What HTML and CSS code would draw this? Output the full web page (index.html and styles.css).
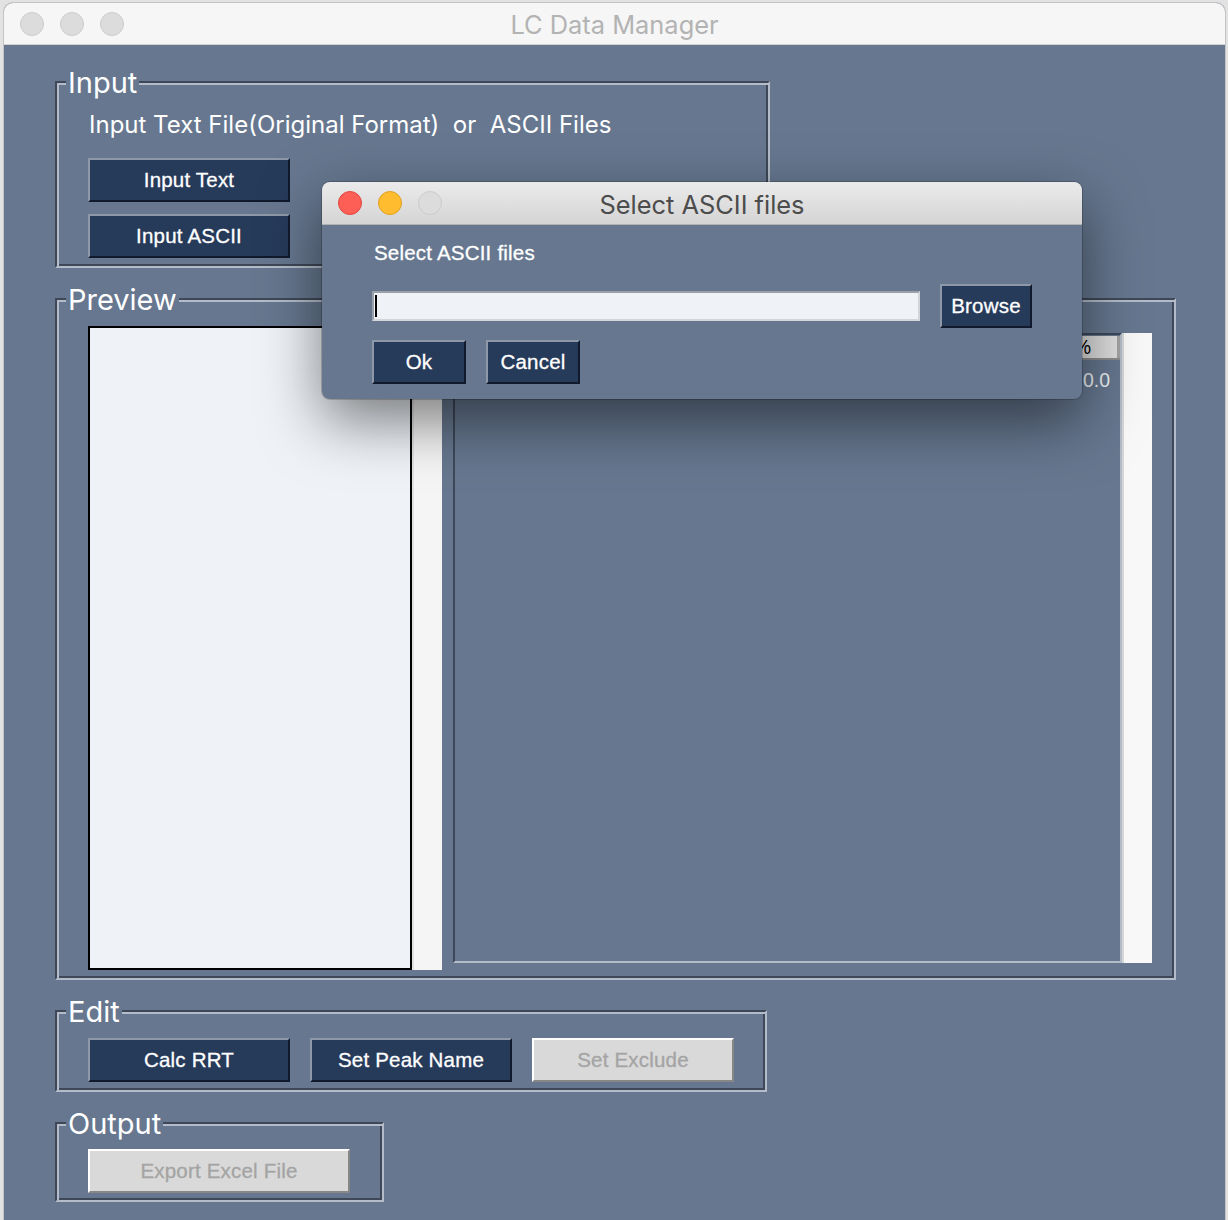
FILE: index.html
```html
<!DOCTYPE html>
<html lang="en">
<head>
<meta charset="utf-8">
<title>LC Data Manager</title>
<link rel="stylesheet" href="styles.css">
</head>
<body>
<div class="desktop">
  <div class="window">
    <div class="titlebar">
      <div class="lights">
        <span class="light"></span><span class="light"></span><span class="light"></span>
      </div>
      <div class="win-title">LC Data Manager</div>
      <div></div>
    </div>

    <div class="content">
      <fieldset class="group group-input">
        <legend>Input</legend>
        <div class="group-body body-input">
          <p class="hint">Input Text File(Original Format)  or  ASCII Files</p>
          <div class="btn-col">
            <button class="btn">Input Text</button>
            <button class="btn">Input ASCII</button>
          </div>
        </div>
      </fieldset>

      <fieldset class="group group-preview">
        <legend>Preview</legend>
        <div class="group-body body-preview">
          <div class="textpane">
            <div class="textbox"></div>
            <div class="vscroll"></div>
          </div>
          <div class="treepane">
            <div class="tree">
              <div class="tree-head">
                <span class="cell c1">No.</span>
                <span class="cell c2">RT</span>
                <span class="cell c3">Peak Name</span>
                <span class="cell c4">RRT</span>
                <span class="cell c5">Area</span>
                <span class="cell c6">Area%</span>
              </div>
              <div class="tree-row">
                <span class="cell c1">1</span>
                <span class="cell c2">0.000</span>
                <span class="cell c3"></span>
                <span class="cell c4">0.000</span>
                <span class="cell c5">0</span>
                <span class="cell c6">0.0</span>
              </div>
            </div>
            <div class="vscroll vscroll-tree"></div>
          </div>
        </div>
      </fieldset>

      <fieldset class="group group-edit">
        <legend>Edit</legend>
        <div class="group-body body-edit">
          <button class="btn">Calc RRT</button>
          <button class="btn">Set Peak Name</button>
          <button class="btn" disabled>Set Exclude</button>
        </div>
      </fieldset>

      <fieldset class="group group-output">
        <legend>Output</legend>
        <div class="group-body body-output">
          <button class="btn btn-wide" disabled>Export Excel File</button>
        </div>
      </fieldset>
    </div>

    <div class="dialog">
      <div class="dlg-titlebar">
        <div class="lights">
          <span class="light red"></span><span class="light yellow"></span><span class="light"></span>
        </div>
        <div class="dlg-title">Select ASCII files</div>
        <div></div>
      </div>
      <div class="dlg-body">
        <div class="dlg-label">Select ASCII files</div>
        <div class="dlg-row">
          <div class="entry"><span class="caret"></span></div>
          <button class="btn btn-browse">Browse</button>
        </div>
        <div class="dlg-actions">
          <button class="btn btn-sm">Ok</button>
          <button class="btn btn-sm">Cancel</button>
        </div>
      </div>
    </div>
  </div>
</div>
</body>
</html>
```

FILE: styles.css
```css
* { box-sizing: border-box; }

body {
  margin: 0;
  background: #e2e2e2;
  font-family: "Liberation Sans", Arial, sans-serif;
}

.desktop {
  height: 1220px;
  padding-top: 2px;
  overflow: hidden;
}

.window {
  position: relative;
  margin-left: 3px;
  width: 1223px;
  height: 1218px;
  border: 1px solid #c4c4c4;
  border-bottom: none;
  border-radius: 10px 10px 0 0;
  background: #66778f;
  overflow: hidden;
}

/* ---------- title bars ---------- */
.titlebar {
  height: 42px;
  background: #f6f6f6;
  border-bottom: 1px solid #d3d3d3;
  display: grid;
  grid-template-columns: 1fr auto 1fr;
  align-items: center;
}

.lights {
  display: flex;
  gap: 16px;
  padding-left: 16px;
}

.light {
  width: 24px;
  height: 24px;
  border-radius: 50%;
  background: #dcdcdc;
  border: 1px solid #cbcbcb;
}

.light.red { background: #fd5f57; border-color: #e0463f; }
.light.yellow { background: #febc2e; border-color: #dfa022; }

.win-title {
  padding-top: 3px;
  font-family: Inter, "Liberation Sans", sans-serif;
  font-size: 25.4px;
  line-height: 28px;
  color: #b3b3b3;
}

/* ---------- content ---------- */
.content {
  padding: 21px 0 0 51px;
}

.group {
  margin: 0 0 15px 0;
  padding: 0;
  min-width: 0;
  border: 2px solid;
  border-color: #3e4858 #b3bcc8 #b3bcc8 #3e4858;
  box-shadow: inset 2px 2px 0 #b3bcc8, inset -2px -2px 0 #3e4858;
}

.group legend {
  margin-left: 9px;
  padding: 2px 2px 0;
  font-family: Inter, "Liberation Sans", sans-serif;
  font-size: 29px;
  line-height: 30px;
  color: #ffffff;
  background: #66778f;
}

.group-input { width: 715px; }
.group-preview { width: 1121px; }
.group-edit { width: 712px; }
.group-output { width: 329px; }

.body-input { padding: 13px 0 8px 31px; }

.hint {
  margin: 0;
  padding-left: 1px;
  font-family: Inter, "Liberation Sans", sans-serif;
  font-size: 24px;
  line-height: 28px;
  color: #ffffff;
  white-space: pre;
}

.btn-col {
  margin-top: 19px;
  display: flex;
  flex-direction: column;
  gap: 12px;
}

.btn {
  width: 202px;
  height: 44px;
  padding: 0;
  background: #263a5a;
  border: 2px solid;
  border-color: #8e98a9 #111a2d #111a2d #8e98a9;
  color: #ffffff;
  font-family: "Liberation Sans", Arial, sans-serif;
  font-size: 20.5px;
  line-height: 24px;
  letter-spacing: 0.2px;
  -webkit-text-stroke: 0.3px currentColor;
}

.btn:disabled {
  background: #d9d9d9;
  border-color: #ffffff #878787 #878787 #ffffff;
  color: #a4a4a4;
}

.btn-wide { width: 262px; }

.body-edit {
  padding: 11px 0 8px 31px;
  display: flex;
  gap: 20px;
}

.body-output { padding: 10px 0 7px 31px; }

/* ---------- preview ---------- */
.body-preview {
  padding: 11px 22px 8px 31px;
  display: flex;
  align-items: center;
  gap: 11px;
}

.textpane {
  display: flex;
  height: 644px;
}

.textbox {
  width: 324px;
  height: 100%;
  border: 2px solid #000000;
  background: #eff3f8;
}

.vscroll {
  width: 30px;
  height: 100%;
  background: #f5f5f5;
  border-left: 2px solid #e2e2e2;
}

.vscroll-tree {
  background: #f8f8f8;
  border-left: 2px solid #d6d6d6;
}

.treepane {
  display: flex;
  height: 630px;
}

.tree {
  width: 669px;
  height: 100%;
  border: 2px solid;
  border-color: #3e4858 #b3bcc8 #b3bcc8 #3e4858;
  background: #66778f;
}

.tree-head {
  display: flex;
  height: 24px;
  margin-top: 1px;
  background: #dfdfdf;
  border-bottom: 2px solid #8d8d8d;
}

.tree-head .cell {
  color: #000000;
  border-right: 3px solid #a3a3a3;
  line-height: 22px;
}

.tree-row {
  display: flex;
  height: 42px;
}

.tree-row .cell {
  color: #eef1f5;
  line-height: 40px;
}

.cell {
  font-family: "Liberation Sans", Arial, sans-serif;
  font-size: 19.5px;
  text-align: center;
  white-space: nowrap;
  overflow: hidden;
}

.c1 { width: 70px; }
.c2 { width: 110px; }
.c3 { width: 200px; }
.c4 { width: 100px; }
.c5 { flex: 1; }
.c6 { width: 120px; text-align: right; }
.tree-head .c6 { padding-right: 26px; }
.tree-row .c6 { padding-right: 10px; }

/* ---------- dialog ---------- */
.dialog {
  position: absolute;
  left: 318px;
  top: 179px;
  width: 760px;
  height: 217px;
  border-radius: 8px;
  background: #66778f;
  overflow: hidden;
  box-shadow: 0 22px 60px rgba(0, 0, 0, 0.5), 0 0 0 1px rgba(0, 0, 0, 0.18);
}

.dlg-titlebar {
  height: 43px;
  background: linear-gradient(#ebebeb, #d4d4d4);
  border-bottom: 1px solid #b2b2b2;
  display: grid;
  grid-template-columns: 1fr auto 1fr;
  align-items: center;
}

.dlg-title {
  padding-top: 4px;
  font-family: Inter, "Liberation Sans", sans-serif;
  font-size: 25.4px;
  line-height: 28px;
  color: #4c4c4c;
}

.dlg-body {
  padding: 16px 0 15px 50px;
}

.dlg-label {
  padding-left: 2px;
  font-size: 20.5px;
  line-height: 24px;
  letter-spacing: 0.2px;
  color: #ffffff;
  -webkit-text-stroke: 0.3px currentColor;
}

.dlg-row {
  margin-top: 19px;
  display: flex;
  align-items: center;
  gap: 20px;
}

.entry {
  width: 548px;
  height: 30px;
  border: 2px solid;
  border-color: #9aa1a9 #d2d6db #d2d6db #9aa1a9;
  background: #eff3f8;
  display: flex;
  align-items: center;
  padding-left: 1px;
}

.caret {
  width: 2px;
  height: 22px;
  background: #000000;
}

.btn-browse { width: 92px; }

.dlg-actions {
  margin-top: 12px;
  display: flex;
  gap: 20px;
}

.btn-sm { width: 94px; }
```
